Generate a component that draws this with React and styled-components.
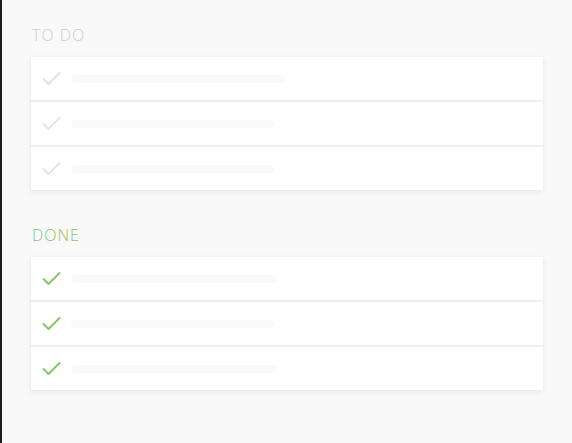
import React from "react";
import styled, { createGlobalStyle } from "styled-components";

const Global = createGlobalStyle`
  html, body { margin: 0; padding: 0; background: #f9f9f9; }
  body { font-family: "Open Sans", "Liberation Sans", sans-serif; }
`;

const Page = styled.div`
  box-sizing: border-box;
  width: 572px;
  height: 443px;
  background: #f9f9f9;
  border-left: 2px solid #1e1e1e;
  padding: 25px 0 0 29px;
`;

const Section = styled.section`
  width: 512px;
  margin-bottom: ${(p) => p.$gap || 0}px;
`;

const Title = styled.h2`
  margin: 0 0 12px 1px;
  font-family: "Open Sans", "Liberation Sans", sans-serif;
  font-weight: 300;
  font-size: 16px;
  line-height: 20px;
  letter-spacing: 1px;
  color: ${(p) => (p.$done ? "#88c466" : "#cbcbcb")};
`;

const Card = styled.ul`
  list-style: none;
  margin: 0;
  padding: 0;
  background: #fff;
  box-shadow: 0 2px 6px rgba(0, 0, 0, 0.07), 0 0 2px rgba(0, 0, 0, 0.04);
`;

const Row = styled.li`
  display: flex;
  align-items: center;
  gap: 10px;
  height: 43px;
  padding-left: 11px;
  border-top: ${(p) => (p.$first ? "none" : "2px solid #efefef")};
`;

const Bar = styled.span`
  display: block;
  height: 8px;
  border-radius: 4px;
  width: ${(p) => p.$w}px;
  background: #fafafa;
`;

const Check = ({ color }) => (
  <svg width="19" height="15" viewBox="0 0 19 15" fill="none">
    <path d="M1.5 8 L6.5 13 L17.5 2" stroke={color} strokeWidth="2" strokeLinecap="round" strokeLinejoin="round" />
  </svg>
);

const List = ({ done, widths }) => (
  <Card>
    {widths.map((w, i) => (
      <Row key={i} $first={i === 0}>
        <Check color={done ? "#88c466" : "#e3e3e3"} />
        <Bar $w={w} />
      </Row>
    ))}
  </Card>
);

export default function App() {
  return (
    <>
      <Global />
      <Page>
        <Section $gap={35}>
          <Title>TO DO</Title>
          <List widths={[215, 203, 203]} />
        </Section>
        <Section>
          <Title $done>DONE</Title>
          <List done widths={[205, 203, 205]} />
        </Section>
      </Page>
    </>
  );
}
